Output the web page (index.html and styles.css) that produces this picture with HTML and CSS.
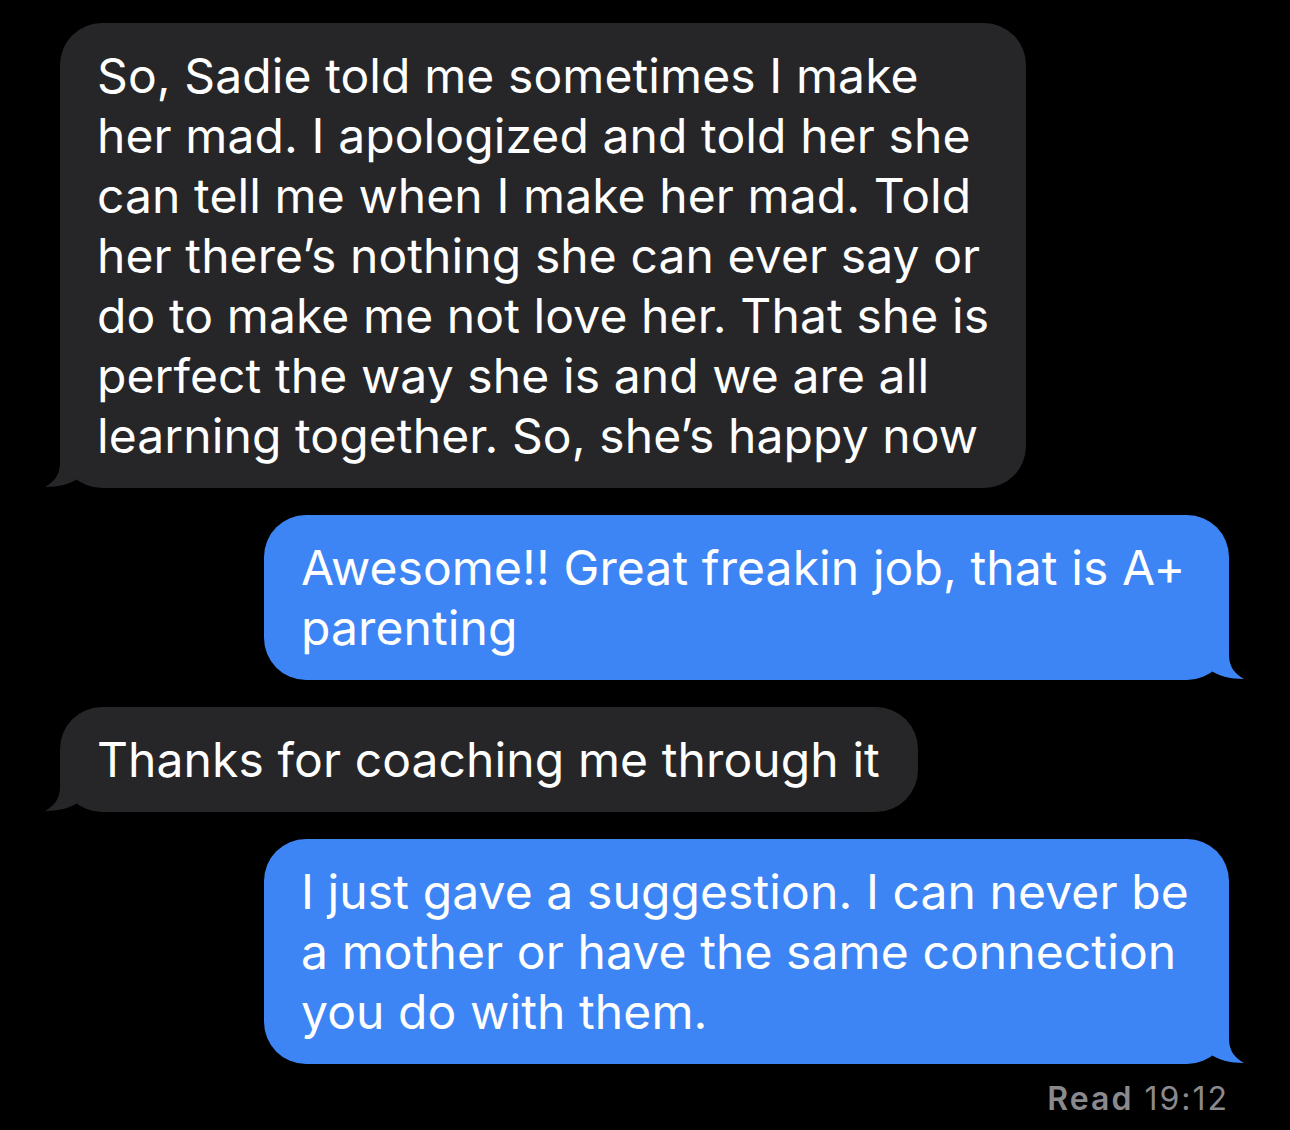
FILE: index.html
```html
<!DOCTYPE html>
<html lang="en">
<head>
<meta charset="utf-8">
<title>Messages</title>
<link rel="stylesheet" href="styles.css">
</head>
<body>
<main class="thread">
  <div class="row in">
    <div class="bubble gray">
      So, Sadie told me sometimes I make<br>her mad. I apologized and told her she<br>can tell me when I make her mad. Told<br>her there’s nothing she can ever say or<br>do to make me not love her. That she is<br>perfect the way she is and we are all<br>learning together. So, she’s happy now
      <svg class="tail" width="70" height="50" viewBox="0 0 70 50"><path d="M16,0 H70 V50 H66 C54,50 44,46 36,39 C28,46 14,49 1,49 C10,44 16,37 16,25 Z"/></svg>
    </div>
  </div>
  <div class="row out">
    <div class="bubble blue full">
      Awesome!! Great freakin job, that is A+<br>parenting
      <svg class="tail" width="70" height="50" viewBox="0 0 70 50"><path d="M16,0 H70 V50 H66 C54,50 44,46 36,39 C28,46 14,49 1,49 C10,44 16,37 16,25 Z"/></svg>
    </div>
  </div>
  <div class="row in">
    <div class="bubble gray">
      Thanks for coaching me through it
      <svg class="tail" width="70" height="50" viewBox="0 0 70 50"><path d="M16,0 H70 V50 H66 C54,50 44,46 36,39 C28,46 14,49 1,49 C10,44 16,37 16,25 Z"/></svg>
    </div>
  </div>
  <div class="row out">
    <div class="bubble blue full">
      I just gave a suggestion. I can never be<br>a mother or have the same connection<br>you do with them.
      <svg class="tail" width="70" height="50" viewBox="0 0 70 50"><path d="M16,0 H70 V50 H66 C54,50 44,46 36,39 C28,46 14,49 1,49 C10,44 16,37 16,25 Z"/></svg>
    </div>
  </div>
  <div class="status"><b>Read</b> 19:12</div>
</main>
</body>
</html>
```

FILE: styles.css
```css
html, body {
  margin: 0;
  padding: 0;
  background: #000;
}
.thread {
  display: flex;
  flex-direction: column;
  gap: 27px;
  padding: 23px 61px 0 60px;
  font-family: Inter, "Open Sans", "Liberation Sans", sans-serif;
  color: #fff;
}
.row {
  display: flex;
}
.row.in { justify-content: flex-start; }
.row.out { justify-content: flex-end; }
.bubble {
  position: relative;
  isolation: isolate;
  box-sizing: border-box;
  max-width: 966px;
  padding: 23px 38px 22px 37px;
  border-radius: 42px;
  font-size: 48px;
  line-height: 60px;
  letter-spacing: 0.1px;
  white-space: nowrap;
}
.bubble.full { width: 965px; }
.gray { background: #262628; }
.blue { background: #3d85f5; }
.tail {
  position: absolute;
  z-index: -1;
  bottom: 0;
  left: -16px;
}
.gray .tail path { fill: #262628; }
.blue .tail path { fill: #3d85f5; }
.out .tail {
  left: auto;
  right: -16px;
  transform: scaleX(-1);
}
.status {
  margin-top: -12px;
  padding-right: 0;
  text-align: right;
  font-size: 32px;
  line-height: 40px;
  color: #8a8a8e;
  letter-spacing: 2px;
}
.status b { font-weight: 600; }
```
